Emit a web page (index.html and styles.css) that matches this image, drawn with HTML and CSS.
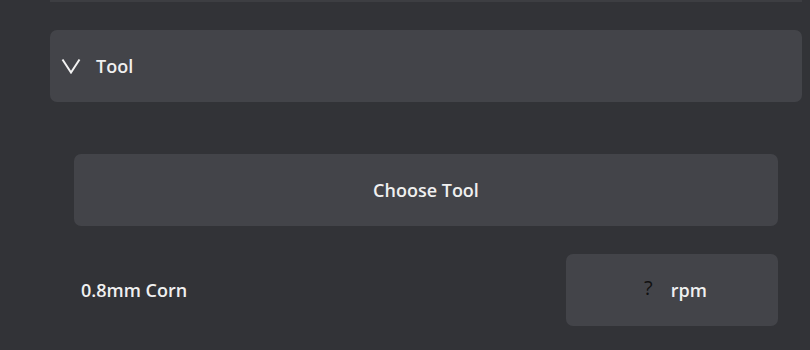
FILE: index.html
```html
<!DOCTYPE html>
<html>
<head>
    <title>Tool Settings</title>
    <link rel="stylesheet" href="styles.css">
</head>
<body>
    <div class="panel-prev"></div>

    <div class="section">
        <div class="section-header">
            <svg class="chevron" width="20" height="16" viewBox="0 0 20 16">
                <polyline points="1.5,1.5 10,14.5 18.5,1.5" fill="none" stroke="#f2f2f2" stroke-width="2"/>
            </svg>
            <span>Tool</span>
        </div>

        <div class="section-body">
            <button class="btn-wide">Choose Tool</button>
            <div class="tool-row">
                <span class="tool-name">0.8mm Corn</span>
                <div class="rpm-box">
                    <span class="rpm-value">?</span>
                    <span>rpm</span>
                </div>
            </div>
        </div>
    </div>
</body>
</html>
```

FILE: styles.css
```css
body {
    margin: 0;
    background-color: #323337;
    font-family: "Open Sans", "DejaVu Sans", sans-serif;
    color: #f0f0f0;
    height: 350px;
    overflow: hidden;
}

.panel-prev {
    margin-left: 50px;
    width: 752px;
    height: 2px;
    background-color: #3d3e42;
}

.section {
    margin: 28px 0 0 50px;
    width: 752px;
}

.section-header {
    display: flex;
    align-items: center;
    height: 72px;
    padding-left: 11px;
    background-color: #434449;
    border-radius: 7px;
    font-size: 18px;
    font-weight: 600;
}

.chevron {
    margin-right: 15px;
}

.section-body {
    padding: 52px 24px 0 24px;
}

.btn-wide {
    display: block;
    width: 100%;
    height: 72px;
    border: none;
    border-radius: 7px;
    background-color: #434449;
    color: #f0f0f0;
    font-family: inherit;
    font-size: 18px;
    font-weight: 600;
    cursor: pointer;
}

.tool-row {
    display: flex;
    justify-content: space-between;
    align-items: center;
    margin-top: 28px;
}

.tool-name {
    padding-left: 7px;
    font-size: 18px;
    font-weight: 600;
}

.rpm-box {
    display: flex;
    justify-content: center;
    align-items: center;
    gap: 18px;
    width: 212px;
    height: 72px;
    padding-left: 7px;
    box-sizing: border-box;
    border-radius: 7px;
    background-color: #434449;
    font-size: 18px;
    font-weight: 600;
}

.rpm-value {
    color: #111111;
    font-weight: 400;
    font-size: 20px;
    margin-bottom: 6px;
}
```
